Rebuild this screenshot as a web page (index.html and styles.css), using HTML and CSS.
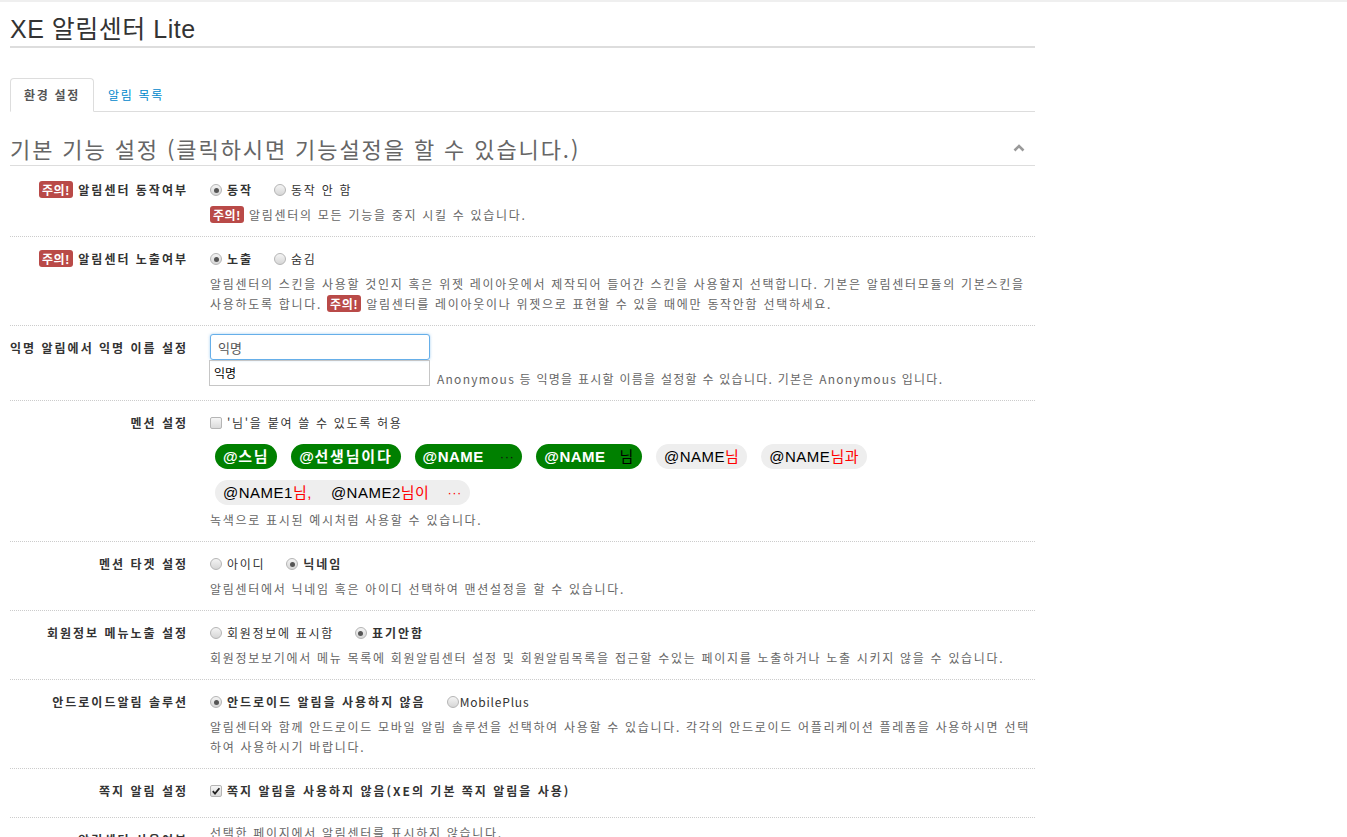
FILE: index.html
```html
<!DOCTYPE html>
<html lang="ko">
<head>
  <meta charset="UTF-8" />
  <title>XE 알림센터 Lite</title>
  <link rel="stylesheet" href="styles.css">
</head>
<body>
  <div class="page">
    <h1 class="title">XE 알림센터 Lite</h1>

    <!-- Tabs -->
    <ul class="tabs">
      <li class="active"><a href="#">환경 설정</a></li>
      <li><a href="#">알림 목록</a></li>
    </ul>

    <div class="section">
      <h2 class="section-head">
        <span>기본 기능 설정 (클릭하시면 기능설정을 할 수 있습니다.)</span>
        <svg class="fold" width="12" height="8" viewBox="0 0 12 8"><polyline points="1.5,6.5 6,2 10.5,6.5" fill="none" stroke="#9a9a9a" stroke-width="2.6"/></svg>
      </h2>

      <div class="row first">
        <div class="row-label"><span class="badge">주의!</span> 알림센터 동작여부</div>
        <div class="row-body">
          <div class="opts">
            <label class="opt on"><span class="radio on"></span>동작</label>
            <label class="opt"><span class="radio"></span>동작 안 함</label>
          </div>
          <p class="help"><span class="badge">주의!</span> 알림센터의 모든 기능을 중지 시킬 수 있습니다.</p>
        </div>
      </div>

      <div class="row">
        <div class="row-label"><span class="badge">주의!</span> 알림센터 노출여부</div>
        <div class="row-body">
          <div class="opts">
            <label class="opt on"><span class="radio on"></span>노출</label>
            <label class="opt"><span class="radio"></span>숨김</label>
          </div>
          <p class="help">알림센터의 스킨을 사용할 것인지 혹은 위젯 레이아웃에서 제작되어 들어간 스킨을 사용할지 선택합니다. 기본은 알림센터모듈의 기본스킨을 사용하도록 합니다. <span class="badge">주의!</span> 알림센터를 레이아웃이나 위젯으로 표현할 수 있을 때에만 동작안함 선택하세요.</p>
        </div>
      </div>

      <div class="row row-input">
        <div class="row-label">익명 알림에서 익명 이름 설정</div>
        <div class="row-body">
          <input class="text-input" type="text" value="익명" />
          <div class="suggest-line">
            <div class="suggest">익명</div>
            <span class="help inline">Anonymous 등 익명을 표시할 이름을 설정할 수 있습니다. 기본은 Anonymous 입니다.</span>
          </div>
        </div>
      </div>

      <div class="row">
        <div class="row-label">멘션 설정</div>
        <div class="row-body">
          <div class="opts">
            <label class="opt"><span class="check"></span>'님'을 붙여 쓸 수 있도록 허용</label>
          </div>
          <div class="chips">
            <span class="chip green">@<span class="ko">스님</span></span>
            <span class="chip green">@<span class="ko">선생님이다</span></span>
            <span class="chip green">@NAME<span class="dots">···</span></span>
            <span class="chip green">@NAME<span class="suffix">님</span></span>
            <span class="chip">@NAME<span class="red">님</span></span>
            <span class="chip">@NAME<span class="red">님과</span></span>
            <span class="chip">@NAME1<span class="red">님,</span><span class="spacer"></span>@NAME2<span class="red">님이</span><span class="dots red">···</span></span>
          </div>
          <p class="help">녹색으로 표시된 예시처럼 사용할 수 있습니다.</p>
        </div>
      </div>

      <div class="row">
        <div class="row-label">멘션 타겟 설정</div>
        <div class="row-body">
          <div class="opts">
            <label class="opt"><span class="radio"></span>아이디</label>
            <label class="opt on"><span class="radio on"></span>닉네임</label>
          </div>
          <p class="help">알림센터에서 닉네임 혹은 아이디 선택하여 맨션설정을 할 수 있습니다.</p>
        </div>
      </div>

      <div class="row">
        <div class="row-label">회원정보 메뉴노출 설정</div>
        <div class="row-body">
          <div class="opts">
            <label class="opt"><span class="radio"></span>회원정보에 표시함</label>
            <label class="opt on"><span class="radio on"></span>표기안함</label>
          </div>
          <p class="help">회원정보보기에서 메뉴 목록에 회원알림센터 설정 및 회원알림목록을 접근할 수있는 페이지를 노출하거나 노출 시키지 않을 수 있습니다.</p>
        </div>
      </div>

      <div class="row">
        <div class="row-label">안드로이드알림 솔루션</div>
        <div class="row-body">
          <div class="opts">
            <label class="opt on"><span class="radio on"></span>안드로이드 알림을 사용하지 않음</label>
            <label class="opt tight"><span class="radio"></span>MobilePlus</label>
          </div>
          <p class="help">알림센터와 함께 안드로이드 모바일 알림 솔루션을 선택하여 사용할 수 있습니다. 각각의 안드로이드 어플리케이션 플레폼을 사용하시면 선택하여 사용하시기 바랍니다.</p>
        </div>
      </div>

      <div class="row row-check">
        <div class="row-label">쪽지 알림 설정</div>
        <div class="row-body">
          <div class="opts">
            <label class="opt on"><span class="check on"><svg width="10" height="10" viewBox="0 0 10 10"><polyline points="1.8,5.2 4,7.6 8.4,2.2" fill="none" stroke="#222" stroke-width="1.8"/></svg></span>쪽지 알림을 사용하지 않음(XE의 기본 쪽지 알림을 사용)</label>
          </div>
        </div>
      </div>

      <div class="row row-last">
        <div class="row-label">알림센터 사용여부</div>
        <div class="row-body">
          <p class="help">선택한 페이지에서 알림센터를 표시하지 않습니다.</p>
        </div>
      </div>
    </div>
  </div>
</body>
</html>
```

FILE: styles.css
```css
* {
  margin: 0;
  padding: 0;
  box-sizing: border-box;
}

body {
  background: #fff;
  border-top: 2px solid #efefef;
  font-family: "Noto Sans CJK KR", "Noto Sans", sans-serif;
  font-size: 12px;
  line-height: 20px;
  color: #333;
  letter-spacing: 1.7px;
}

.page {
  width: 1025px;
  margin-left: 10px;
  padding-top: 10px;
}

.title {
  font-family: "Liberation Sans", "Noto Sans CJK KR", sans-serif;
  font-size: 25px;
  font-weight: normal;
  line-height: 34px;
  letter-spacing: 0.5px;
  color: #333;
  border-bottom: 2px solid #ddd;
}

/* Tabs */
.tabs {
  list-style: none;
  display: flex;
  margin-top: 30px;
  border-bottom: 1px solid #ddd;
}

.tabs a {
  display: block;
  padding: 7px 13px 8px;
  line-height: 17px;
  border: 1px solid transparent;
  border-radius: 4px 4px 0 0;
  margin-bottom: -1px;
  color: #0088cc;
  text-decoration: none;
}

.tabs .active a {
  border-color: #ddd;
  border-bottom-color: #fff;
  background: #fff;
  color: #555;
  font-weight: bold;
}

/* Section */
.section-head {
  display: flex;
  justify-content: space-between;
  align-items: center;
  margin-top: 21px;
  padding-bottom: 2px;
  font-size: 22px;
  font-weight: normal;
  line-height: 30px;
  letter-spacing: 1.9px;
  color: #666;
  border-bottom: 1px solid #ddd;
}

.fold {
  margin-right: 10px;
}

.row {
  display: flex;
  padding: 12px 0 11px;
  border-bottom: 1px dotted #ccc;
}

.row.first {
  padding-top: 14px;
}

.row-label {
  width: 178px;
  flex-shrink: 0;
  text-align: right;
  font-weight: bold;
  letter-spacing: 2px;
  color: #333;
}

.row-body {
  flex: 1;
  margin-left: 22px;
}

.badge {
  display: inline-block;
  padding: 0 3px;
  line-height: 17px;
  border-radius: 3px;
  background: #b94a48;
  color: #fff;
  font-weight: bold;
  letter-spacing: 0.5px;
}

.opts {
  display: flex;
  align-items: center;
}

.opt {
  display: flex;
  align-items: center;
  gap: 5px;
  margin-right: 21px;
  color: #333;
}

.opt.on {
  font-weight: bold;
  letter-spacing: 2px;
}

.opt.tight {
  gap: 1px;
  letter-spacing: 0.8px;
}

.radio {
  width: 12px;
  height: 12px;
  border-radius: 50%;
  border: 1px solid #b5b5b5;
  background: linear-gradient(#f4f4f4, #d6d6d6);
  display: inline-flex;
  align-items: center;
  justify-content: center;
}

.radio.on::after {
  content: "";
  width: 5px;
  height: 5px;
  border-radius: 50%;
  background: #555;
}

.check {
  width: 12px;
  height: 12px;
  border-radius: 2px;
  border: 1px solid #b5b5b5;
  background: linear-gradient(#f6f6f6, #dadada);
  display: inline-flex;
  align-items: center;
  justify-content: center;
}

.help {
  margin-top: 5px;
  color: #666;
}

/* Anonymous name row */
.row.row-input {
  padding-top: 8px;
  padding-bottom: 14px;
}

.row-input .row-label {
  padding-top: 4px;
}

.text-input {
  display: block;
  width: 220px;
  height: 26px;
  padding: 0 7px;
  border: 1px solid #66afe9;
  border-radius: 3px;
  box-shadow: 0 0 3px rgba(102, 175, 233, 0.6);
  font-family: inherit;
  font-size: 13px;
  color: #555;
  outline: none;
}

.suggest-line {
  display: flex;
  align-items: flex-end;
}

.suggest {
  width: 221px;
  height: 26px;
  margin-left: -1px;
  padding: 2px 4px;
  border: 1px solid #c6c6c6;
  color: #000;
  letter-spacing: 0;
  line-height: 20px;
}

.help.inline {
  margin: 0 0 -3px 7px;
  letter-spacing: 1.25px;
}

/* Mention chips */
.chips {
  display: flex;
  flex-wrap: wrap;
  gap: 11px 14px;
  margin: 11px 0 0 5px;
}

.chip {
  display: inline-flex;
  align-items: center;
  height: 25px;
  padding: 0 8px;
  border-radius: 13px;
  background: #eee;
  color: #000;
  font-family: "Liberation Sans", "Noto Sans CJK KR", sans-serif;
  font-size: 15px;
  letter-spacing: 0.5px;
}

.chip.green {
  background: #008000;
  color: #fff;
  font-weight: bold;
}

.chip .ko {
  letter-spacing: 1.8px;
}

.chip .red {
  color: #f00;
}

.chip .suffix {
  margin-left: 14px;
  color: #000;
  font-weight: normal;
}

.chip .dots {
  margin-left: 16px;
  font-size: 13px;
  font-weight: normal;
  color: #111;
}

.chip .dots.red {
  margin-left: 18px;
  color: #f00;
}

.chip .spacer {
  width: 19px;
}

.row.row-check {
  padding-bottom: 16px;
}

.row-last .row-body {
  margin-top: -7px;
}

.row-last .help {
  margin-top: 0;
}
```
